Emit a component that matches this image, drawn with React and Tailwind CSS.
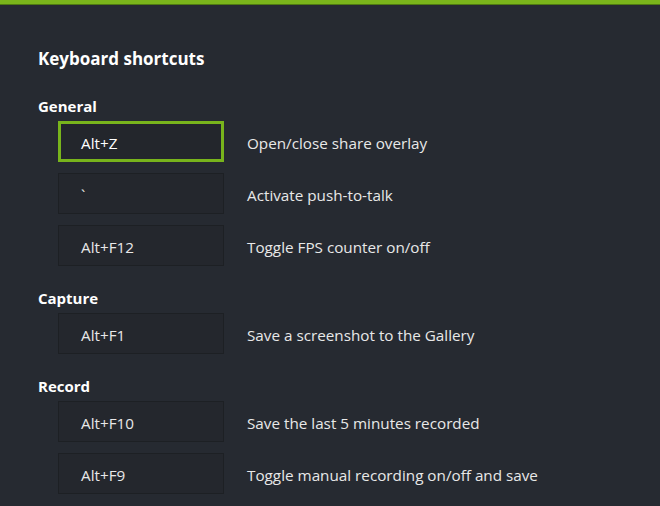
import React from 'react'

const sections = [
  {
    title: 'General',
    rows: [
      { keys: 'Alt+Z', label: 'Open/close share overlay', active: true },
      { keys: '`', label: 'Activate push-to-talk' },
      { keys: 'Alt+F12', label: 'Toggle FPS counter on/off' },
    ],
  },
  {
    title: 'Capture',
    rows: [{ keys: 'Alt+F1', label: 'Save a screenshot to the Gallery' }],
  },
  {
    title: 'Record',
    rows: [
      { keys: 'Alt+F10', label: 'Save the last 5 minutes recorded' },
      { keys: 'Alt+F9', label: 'Toggle manual recording on/off and save' },
    ],
  },
]

function ShortcutRow({ keys, label, active }) {
  return (
    <div className="flex items-center">
      <div
        className={
          active
            ? 'flex h-[41px] w-[166px] items-center border-[3px] border-[#78b41c] bg-[#23262c] pl-[20px] pt-[4px] text-white'
            : 'flex h-[41px] w-[166px] items-center border border-[#1d2024] bg-[#24272d] pl-[22px] pt-[4px] text-[#e8e8e8]'
        }
      >
        {keys}
      </div>
      <div className="ml-[23px] pt-[4px] text-[#e8e8e8]">{label}</div>
    </div>
  )
}

export default function App() {
  return (
    <div
      className="h-[506px] w-[660px] overflow-hidden bg-[#262a31] text-[15.25px]"
      style={{ fontFamily: '"Open Sans", "Noto Sans", sans-serif' }}
    >
      <div className="h-[4px] bg-[#7ab51b]" />
      <div className="h-[1px] bg-[#4f7a12]" />
      <div className="pl-[38px] pt-[42px]">
        <div className="h-[24px] text-[17px] font-bold leading-[24px] text-white">Keyboard shortcuts</div>

        {sections.map((s, i) => (
          <div key={s.title} className={i === 0 ? 'mt-[25px]' : 'mt-[22px]'}>
            <div className="h-[20px] text-[15px] font-bold leading-[20px] text-white">{s.title}</div>
            <div className="mt-[5px] flex flex-col gap-[11px] pl-[20px]">
              {s.rows.map((r) => (
                <ShortcutRow key={r.keys} {...r} />
              ))}
            </div>
          </div>
        ))}
      </div>
    </div>
  )
}
